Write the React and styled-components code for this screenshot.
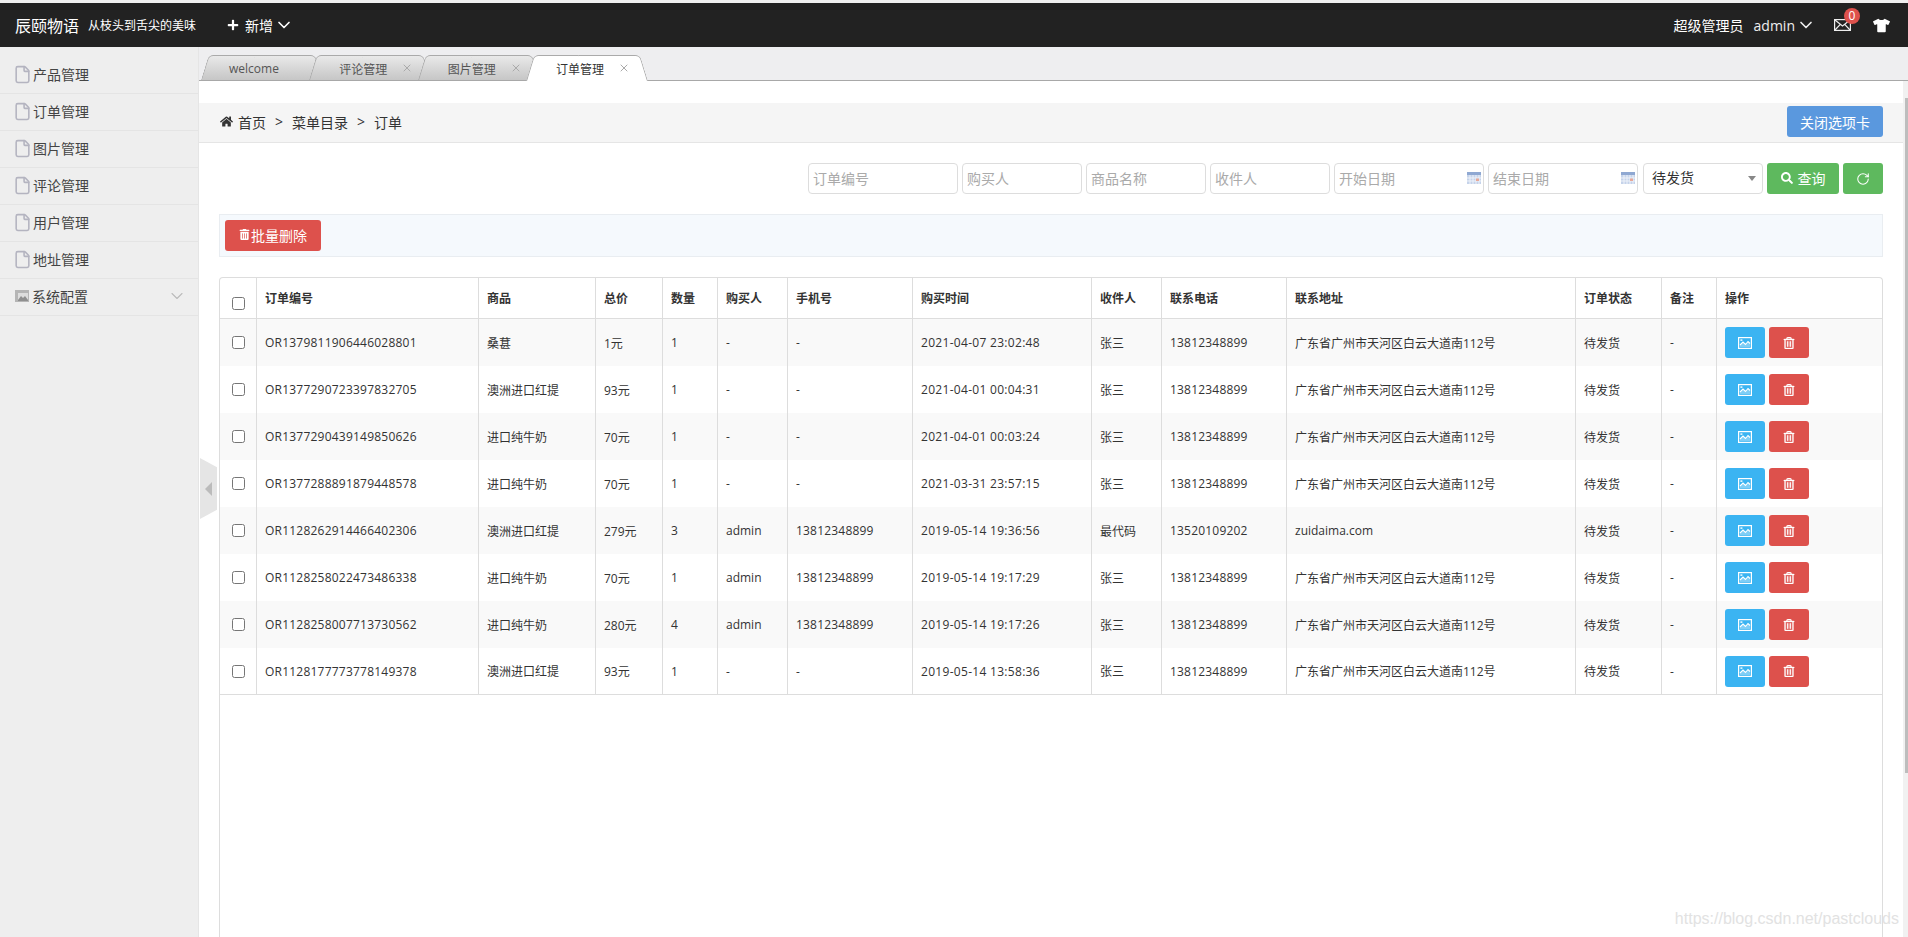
import React from 'react';
import styled, { createGlobalStyle } from 'styled-components';
import { FaPlus, FaTshirt, FaHome, FaSearch, FaRegTrashAlt, FaTrashAlt } from 'react-icons/fa';
import { ChevronDown, File, RotateCw, X } from 'lucide-react';

const GlobalStyle = createGlobalStyle`
html, body {
  margin: 0;
  height: 100%;
  overflow: hidden;
}
body {
  background: #f0f0f0;
  color: #333;
  font-family: "Open Sans", "Noto Sans CJK SC", sans-serif;
  font-size: 14px;
}
* {
  box-sizing: border-box;
}
`;

const Page = styled.div`
position: relative;
height: 937px;
padding-top: 3px;
display: flex;
flex-direction: column;
overflow: hidden;
`;

const Navbar = styled.header`
height: 44px;
flex: none;
background: #222;
color: #fff;
display: flex;
align-items: center;
padding: 0 18px 0 15px;
`;

const Logo = styled.span`
font-size: 16px;
`;

const Slogan = styled.span`
font-size: 12px;
margin-left: 9px;
`;

const AddMenu = styled.div`
margin-left: 31px;
display: flex;
align-items: center;
gap: 1px;
svg:first-child {
  margin-right: 5px;
}
`;

const UserArea = styled.div`
margin-left: auto;
display: flex;
align-items: center;
`;

const UserRole = styled.span`
margin-right: 10px;
`;

const UserName = styled.span`
display: flex;
align-items: center;
gap: 1px;
margin-right: 18px;
color: #eee;
`;

const MailBox = styled.span`
position: relative;
display: flex;
margin-right: 22px;
`;

const Badge = styled.span`
position: absolute;
top: -11px;
left: 10px;
width: 16px;
height: 16px;
border-radius: 50%;
background: #dd514c;
font-size: 12px;
line-height: 16px;
text-align: center;
`;

const Body = styled.div`
flex: 1;
display: flex;
min-height: 0;
`;

const Sidebar = styled.aside`
width: 199px;
flex: none;
padding-top: 10px;
background: #eee;
border-right: 1px solid #e5e5e5;
`;

const MenuItem = styled.div`
height: 37px;
padding: 0 0 2px 13px;
display: flex;
align-items: center;
gap: 1px;
color: #444;
border-bottom: 1px solid #e4e4e4;
svg.more {
  margin-left: auto;
  margin-right: 11px;
}
`;

const Collapse = styled.div`
position: absolute;
left: 200px;
top: 458px;
width: 17px;
height: 61px;
background: #e5e5e5;
clip-path: polygon(0 0, 100% 15%, 100% 85%, 0 100%);
&::after {
  content: '';
  position: absolute;
  left: 5px;
  top: 24px;
  border: 7px solid transparent;
  border-left: 0;
  border-right: 7px solid #bbb;
}
`;

const Main = styled.main`
flex: 1;
min-width: 0;
display: flex;
flex-direction: column;
background: #fff;
`;

const TabBar = styled.div`
height: 34px;
flex: none;
padding: 8px 0 0 2px;
display: flex;
background: #eeeef0;
border-bottom: 1px solid #a8a8a8;
`;

const Tab = styled.div`
position: relative;
width: 122px;
height: ${(p) => (p.$active ? 26 : 25)}px;
margin-right: -13.7px;
padding: 2px 0 0 ${(p) => (p.$closable ? 30 : 28)}px;
display: flex;
align-items: center;
font-size: 12px;
color: ${(p) => (p.$active ? '#333' : '#555')};
z-index: ${(p) => (p.$active ? 2 : 1)};
&::before,
&::after {
  content: '';
  position: absolute;
  top: 0;
  bottom: 0;
  width: 50%;
  z-index: -1;
  border-top: 1px solid #aaa;
  background: ${(p) => (p.$active ? '#fff' : 'linear-gradient(#e9e9e9, #c6c6c6)')};
  transform-origin: bottom;
}
&::before {
  left: 0;
  border-left: 1px solid #aaa;
  border-top-left-radius: 5px;
  transform: skewX(-17deg);
}
&::after {
  right: 0;
  border-right: 1px solid #aaa;
  border-top-right-radius: 5px;
  transform: skewX(17deg);
}
svg {
  position: absolute;
  left: 92px;
  top: 7px;
  color: #aaa;
}
`;

const ContentRow = styled.div`
flex: 1;
min-height: 0;
display: flex;
`;

const Content = styled.div`
flex: 1;
min-width: 0;
padding-top: 22px;
display: flex;
flex-direction: column;
`;

const ScrollTrack = styled.div`
width: 5px;
flex: none;
background: #f1f1f1;
`;

const ScrollThumb = styled.div`
width: 3px;
height: 675px;
margin: 17px 0 0 2px;
background: #bdbdbd;
`;

const Crumbs = styled.nav`
height: 40px;
flex: none;
padding: 0 20px 2px 21px;
display: flex;
align-items: center;
background: #f5f5f5;
border-bottom: 1px solid #e5e5e5;
`;

const CrumbHome = styled.span`
display: flex;
align-items: center;
gap: 5px;
`;

const CrumbSep = styled.span`
margin: 0 9px;
`;

const CloseBtn = styled.button`
margin-left: auto;
width: 96px;
height: 31px;
padding: 0;
border: 0;
border-radius: 3px;
background: #5a98de;
color: #fff;
font: inherit;
`;

const Panel = styled.div`
flex: 1;
min-height: 0;
padding: 20px 20px 0 20px;
display: flex;
flex-direction: column;
`;

const SearchRow = styled.form`
display: flex;
justify-content: flex-end;
gap: 4px;
margin: 0;
`;

const FieldBox = styled.span`
position: relative;
display: block;
width: ${(p) => p.$w}px;
height: 31px;
svg {
  position: absolute;
  right: 3px;
  top: 9px;
}
`;

const Field = styled.input`
width: 100%;
height: 100%;
padding: 0 4px;
border: 1px solid #ddd;
border-radius: 4px;
background: #fff;
font: inherit;
&::placeholder {
  color: #aaa;
  opacity: 1;
}
`;

const SelectBox = styled.span`
position: relative;
display: block;
width: 120px;
height: 31px;
margin-left: 1px;
&::after {
  content: '';
  position: absolute;
  right: 7px;
  top: 13px;
  border: 4px solid transparent;
  border-top: 5px solid #888;
  border-bottom: 0;
}
`;

const Select = styled.select`
width: 100%;
height: 100%;
padding: 0 0 2px 8px;
appearance: none;
border: 1px solid #ddd;
border-radius: 4px;
background: #fff;
color: #333;
font: inherit;
`;

const ColorBtn = styled.button`
width: ${(p) => p.$w}px;
height: 31px;
padding: 0 0 ${(p) => (p.$text ? 2 : 0)}px;
border: 0;
border-radius: 3px;
background: ${(p) => p.$bg};
color: #fff;
font: inherit;
display: inline-flex;
align-items: center;
justify-content: center;
gap: ${(p) => p.$gap || 0}px;
`;

const Toolbar = styled.div`
height: 43px;
flex: none;
margin-top: 20px;
padding: 5px 5px;
background: #f5f9fd;
border: 1px solid #e9edf1;
`;

const TableWrap = styled.div`
flex: 1;
min-height: 0;
margin-top: 20px;
border: 1px solid #ddd;
border-bottom: 0;
border-radius: 4px 4px 0 0;
`;

const Table = styled.table`
width: 100%;
table-layout: fixed;
border-collapse: separate;
border-spacing: 0;
font-size: 12px;
`;

const Th = styled.th`
height: 41px;
padding: 0 8px;
text-align: left;
font-weight: 600;
border-bottom: 1px solid #ddd;
& + & {
  border-left: 1px solid #ddd;
}
`;

const Tr = styled.tr`
background: ${(p) => (p.$odd ? '#f9f9f9' : '#fff')};
`;

const Td = styled.td`
height: 47px;
padding: 0 8px;
white-space: nowrap;
letter-spacing: ${(p) => p.$spacing || 0}px;
& + & {
  border-left: 1px solid #ddd;
}
tbody tr:last-child & {
  border-bottom: 1px solid #ddd;
}
`;

const CheckCell = styled.div`
display: flex;
justify-content: center;
input {
  margin: ${(p) => (p.$head ? '11px 0 0' : 0)};
  width: 13px;
  height: 13px;
}
`;

const Actions = styled.div`
display: flex;
gap: 4px;
`;

const Watermark = styled.div`
position: absolute;
right: 9px;
bottom: 9px;
font-family: "Liberation Sans", sans-serif;
font-size: 16px;
color: #e2e2e2;
`;

const ConfigSvg = styled.svg`
margin: 0 2px;
`;

const ImageIcon = () => (
  <svg width="14" height="12" viewBox="0 0 14 12">
    <rect x="0.6" y="0.6" width="12.8" height="10.8" fill="none" stroke="#fff" strokeWidth="1.2" />
    <rect x="2.4" y="2.4" width="2" height="1.4" fill="#fff" />
    <path d="M2 8 L5 5 L7.5 7.5 L10 4.5 L12 6.5 V10 H2 Z" fill="#fff" fillOpacity="0.35" stroke="none" />
    <path d="M2 8 L5 5 L7.5 7.5 L10 4.5 L12 6.5" fill="none" stroke="#fff" strokeWidth="1.1" />
  </svg>
);

const MailIcon = () => (
  <svg width="17" height="12" viewBox="0 0 17 12" fill="none" stroke="#eee" strokeWidth="1.2">
    <rect x="0.6" y="0.6" width="15.8" height="10.8" />
    <path d="M1 1 L8.5 7 L16 1 M1 11 L6.3 5.4 M16 11 L10.7 5.4" />
  </svg>
);

const ConfigIcon = () => (
  <ConfigSvg width="14" height="12" viewBox="0 0 14 12">
    <rect x="0" y="0" width="14" height="12" fill="#b5b5b5" />
    <rect x="3" y="3" width="10" height="8" fill="#ddd" />
    <path d="M3 10 L6 6 L8 8 L10 6 L13 10 V11 H3 Z" fill="#8f8f8f" />
  </ConfigSvg>
);

const CalendarIcon = () => (
  <svg width="14" height="12" viewBox="0 0 14 12">
    <rect width="14" height="12" fill="#c5d3ea" />
    <rect width="14" height="3" fill="#8fa8d2" />
    <path d="M3 3 V12 M6 3 V12 M9 3 V12 M12 3 V12 M0 6 H14 M0 9 H14" stroke="#eef2f9" strokeWidth="1" />
    <rect x="9" y="6.5" width="3" height="2.5" fill="#e8a898" />
  </svg>
);

const menus = ['产品管理', '订单管理', '图片管理', '评论管理', '用户管理', '地址管理'];

const tabs = [
  { name: 'welcome' },
  { name: '评论管理', closable: true },
  { name: '图片管理', closable: true },
  { name: '订单管理', closable: true, active: true },
];

const fields = [
  { name: '订单编号', w: 150 },
  { name: '购买人', w: 120 },
  { name: '商品名称', w: 120 },
  { name: '收件人', w: 120 },
  { name: '开始日期', w: 150, date: true },
  { name: '结束日期', w: 150, date: true },
];

const columns = [
  { w: 36 },
  { name: '订单编号', w: 222 },
  { name: '商品', w: 117 },
  { name: '总价', w: 67 },
  { name: '数量', w: 55 },
  { name: '购买人', w: 70 },
  { name: '手机号', w: 125 },
  { name: '购买时间', w: 179 },
  { name: '收件人', w: 70 },
  { name: '联系电话', w: 125 },
  { name: '联系地址', w: 289 },
  { name: '订单状态', w: 86 },
  { name: '备注', w: 55 },
  { name: '操作', w: 166 },
];

const Col = styled.col`
width: ${(p) => p.$w}px;
`;

// digits run a bit wider in the original font
const spacing = { 0: 0.22, 5: 0.2, 6: 0.3, 8: 0.2 };

const addr = '广东省广州市天河区白云大道南112号';
const phone = '13812348899';

const orders = [
  ['OR1379811906446028801', '桑葚', '1元', 1, '-', '-', '2021-04-07 23:02:48', '张三', phone, addr],
  ['OR1377290723397832705', '澳洲进口红提', '93元', 1, '-', '-', '2021-04-01 00:04:31', '张三', phone, addr],
  ['OR1377290439149850626', '进口纯牛奶', '70元', 1, '-', '-', '2021-04-01 00:03:24', '张三', phone, addr],
  ['OR1377288891879448578', '进口纯牛奶', '70元', 1, '-', '-', '2021-03-31 23:57:15', '张三', phone, addr],
  ['OR1128262914466402306', '澳洲进口红提', '279元', 3, 'admin', phone, '2019-05-14 19:36:56', '最代码', '13520109202', 'zuidaima.com'],
  ['OR1128258022473486338', '进口纯牛奶', '70元', 1, 'admin', phone, '2019-05-14 19:17:29', '张三', phone, addr],
  ['OR1128258007713730562', '进口纯牛奶', '280元', 4, 'admin', phone, '2019-05-14 19:17:26', '张三', phone, addr],
  ['OR1128177773778149378', '澳洲进口红提', '93元', 1, '-', '-', '2019-05-14 13:58:36', '张三', phone, addr],
];

function App() {
  return (
    <Page>
      <GlobalStyle />
      <Navbar>
        <Logo>辰颐物语</Logo>
        <Slogan>从枝头到舌尖的美味</Slogan>
        <AddMenu>
          <FaPlus size={12} />
          <span>新增</span>
          <ChevronDown size={20} />
        </AddMenu>
        <UserArea>
          <UserRole>超级管理员</UserRole>
          <UserName>admin <ChevronDown size={20} /></UserName>
          <MailBox>
            <MailIcon />
            <Badge>0</Badge>
          </MailBox>
          <FaTshirt size={17} />
        </UserArea>
      </Navbar>
      <Body>
        <Sidebar>
          {menus.map((m) => (
            <MenuItem key={m}>
              <File size={19} strokeWidth={2} color="#b4b4c0" />
              {m}
            </MenuItem>
          ))}
          <MenuItem>
            <ConfigIcon />
            系统配置
            <ChevronDown className="more" size={20} strokeWidth={1.3} color="#bbb" />
          </MenuItem>
        </Sidebar>
        <Main>
          <TabBar>
            {tabs.map((t) => (
              <Tab key={t.name} $active={t.active} $closable={t.closable}>
                {t.name}
                {t.closable && <X size={12} strokeWidth={2} />}
              </Tab>
            ))}
          </TabBar>
          <ContentRow>
            <Content>
              <Crumbs>
                <CrumbHome><FaHome size={13} /> 首页</CrumbHome>
                <CrumbSep>&gt;</CrumbSep>
                <span>菜单目录</span>
                <CrumbSep>&gt;</CrumbSep>
                <span>订单</span>
                <CloseBtn type="button">关闭选项卡</CloseBtn>
              </Crumbs>
              <Panel>
                <SearchRow>
                  {fields.map((f) => (
                    <FieldBox key={f.name} $w={f.w}>
                      <Field placeholder={f.name} />
                      {f.date && <CalendarIcon />}
                    </FieldBox>
                  ))}
                  <SelectBox>
                    <Select defaultValue="待发货">
                      <option>待发货</option>
                    </Select>
                  </SelectBox>
                  <ColorBtn type="button" $w={72} $bg="#5eb95e" $gap={5} $text>
                    <FaSearch size={12} /> 查询
                  </ColorBtn>
                  <ColorBtn type="button" $w={40} $bg="#5eb95e">
                    <RotateCw size={14} strokeWidth={1.8} />
                  </ColorBtn>
                </SearchRow>
                <Toolbar>
                  <ColorBtn type="button" $w={96} $bg="#dd514c" $gap={1} $text>
                    <FaTrashAlt size={11} /> 批量删除
                  </ColorBtn>
                </Toolbar>
                <TableWrap>
                  <Table>
                    <colgroup>
                      {columns.map((c, i) => <Col key={i} $w={c.w} />)}
                    </colgroup>
                    <thead>
                      <tr>
                        {columns.map((c, i) => (
                          <Th key={i}>
                            {c.name || <CheckCell $head><input type="checkbox" /></CheckCell>}
                          </Th>
                        ))}
                      </tr>
                    </thead>
                    <tbody>
                      {orders.map((row, i) => (
                        <Tr key={row[0]} $odd={i % 2 === 0}>
                          <Td><CheckCell><input type="checkbox" /></CheckCell></Td>
                          {row.map((v, j) => <Td key={j} $spacing={spacing[j]}>{v}</Td>)}
                          <Td>待发货</Td>
                          <Td>-</Td>
                          <Td>
                            <Actions>
                              <ColorBtn type="button" $w={40} $bg="#3bb4f2"><ImageIcon /></ColorBtn>
                              <ColorBtn type="button" $w={40} $bg="#dd514c">
                                <FaRegTrashAlt size={12} stroke="currentColor" strokeWidth={12} />
                              </ColorBtn>
                            </Actions>
                          </Td>
                        </Tr>
                      ))}
                    </tbody>
                  </Table>
                </TableWrap>
              </Panel>
            </Content>
            <ScrollTrack><ScrollThumb /></ScrollTrack>
          </ContentRow>
        </Main>
      </Body>
      <Collapse />
      <Watermark>https://blog.csdn.net/pastclouds</Watermark>
    </Page>
  );
}

export default App;
